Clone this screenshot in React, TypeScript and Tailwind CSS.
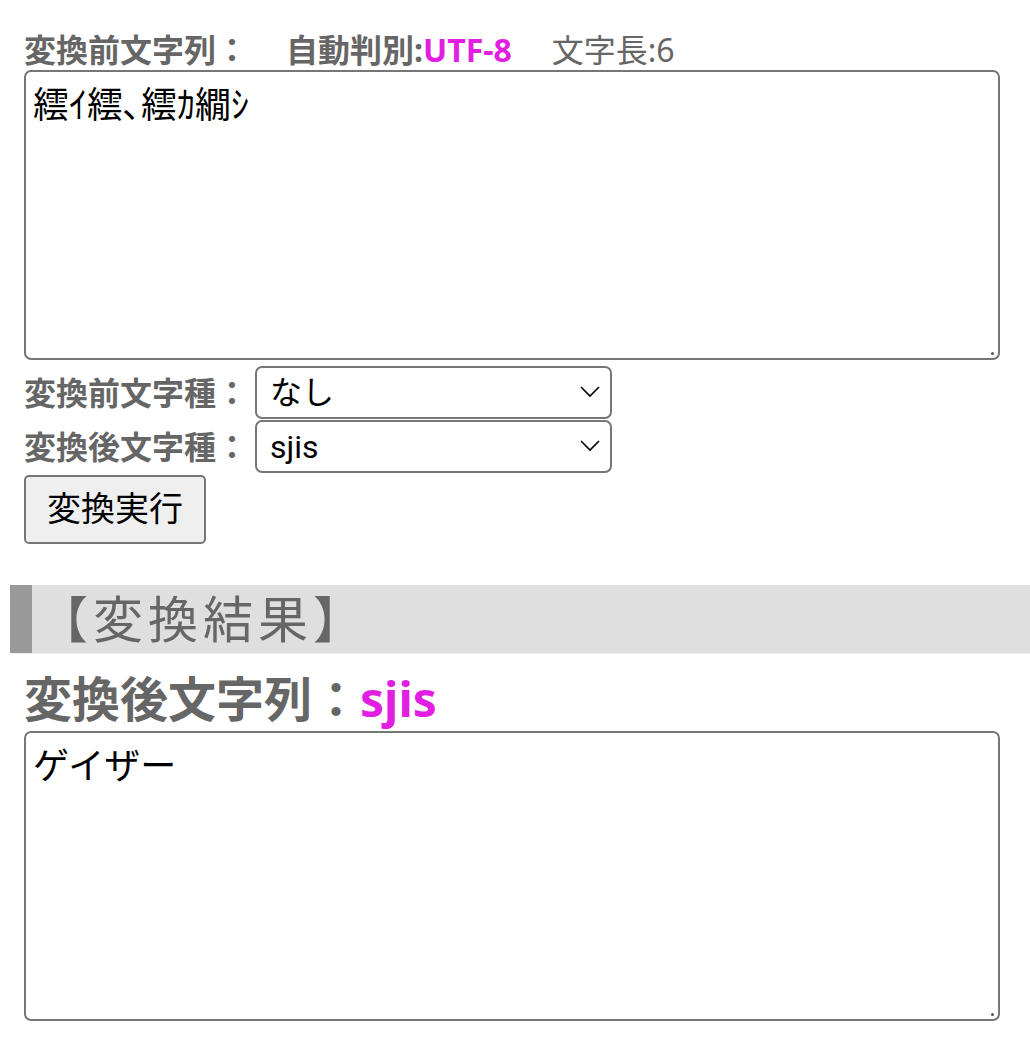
const labelFont = "font-['Noto_Sans','Noto_Sans_CJK_JP',sans-serif]";
const fieldFont = "font-['Roboto','Noto_Sans_CJK_JP',sans-serif]";

function Select({ value }: { value: string }) {
  return (
    <div className="relative w-[357px] h-[53px]">
      <select
        defaultValue={value}
        className={`${fieldFont} appearance-none w-full h-full border-2 border-[#767676] rounded-[7px] bg-white pl-[13px] text-[32px] text-black outline-none`}
      >
        <option>{value}</option>
      </select>
      <svg
        className="absolute right-[12px] top-[20px] pointer-events-none"
        width="20"
        height="12"
        viewBox="0 0 20 12"
        fill="none"
      >
        <polyline points="1,1 10,10 19,1" stroke="#000" strokeWidth="1.6" />
      </svg>
    </div>
  );
}

function TextBox({ value }: { value: string }) {
  return (
    <div className="relative">
      <textarea
        defaultValue={value}
        className={`${fieldFont} block w-full h-[290px] resize-none border-2 border-[#767676] rounded-[7px] px-[7px] py-[13px] text-[36px] leading-[42px] text-black outline-none`}
      />
      <span className="absolute right-[6px] bottom-[5px] w-[3px] h-[3px] rounded-full bg-[#555]" />
    </div>
  );
}

export default function App() {
  return (
    <div className={`${labelFont} bg-white min-h-[1053px] pt-[30px] pl-[10px]`}>
      <div className="pl-[14px] pr-[30px]">
        {/* input string */}
        <div className="flex items-center h-[40px] text-[32px] text-[#666]">
          <span className="font-bold">変換前文字列：</span>
          <span className="ml-[38px] font-bold">
            自動判別:<span className="text-[#e21ee2]">UTF-8</span>
          </span>
          <span className="ml-[40px] font-normal">文字長:6</span>
        </div>
        <TextBox value="繧ｲ繧､繧ｶ繝ｼ" />

        {/* encoding selects */}
        <div className="flex flex-col gap-[1px] mt-[6px]">
          <div className="flex items-center">
            <span className="w-[231px] text-[32px] font-bold text-[#666]">変換前文字種：</span>
            <Select value="なし" />
          </div>
          <div className="flex items-center">
            <span className="w-[231px] text-[32px] font-bold text-[#666]">変換後文字種：</span>
            <Select value="sjis" />
          </div>
        </div>
        <button className={`${fieldFont} mt-[2px] w-[182px] h-[69px] border-2 border-[#767676] rounded-[5px] bg-[#efefef] text-[34px] text-black`}>
          変換実行
        </button>
      </div>

      {/* result */}
      <div className="mt-[41px] flex h-[69px] bg-[#dfdfdf] border-b border-[#eeeeee]">
        <div className="w-[22px] bg-[#999]" />
        <h2 className="pl-[6px] text-[50px] leading-[69px] tracking-[5px] text-[#666]">【変換結果】</h2>
      </div>
      <div className="pl-[14px] pr-[30px]">
        <h3 className="mt-[12px] h-[65px] text-[48px] leading-[65px] font-bold text-[#666]">
          変換後文字列：<span className="text-[#e21ee2]">sjis</span>
        </h3>
        <TextBox value="ゲイザー" />
      </div>
    </div>
  );
}
